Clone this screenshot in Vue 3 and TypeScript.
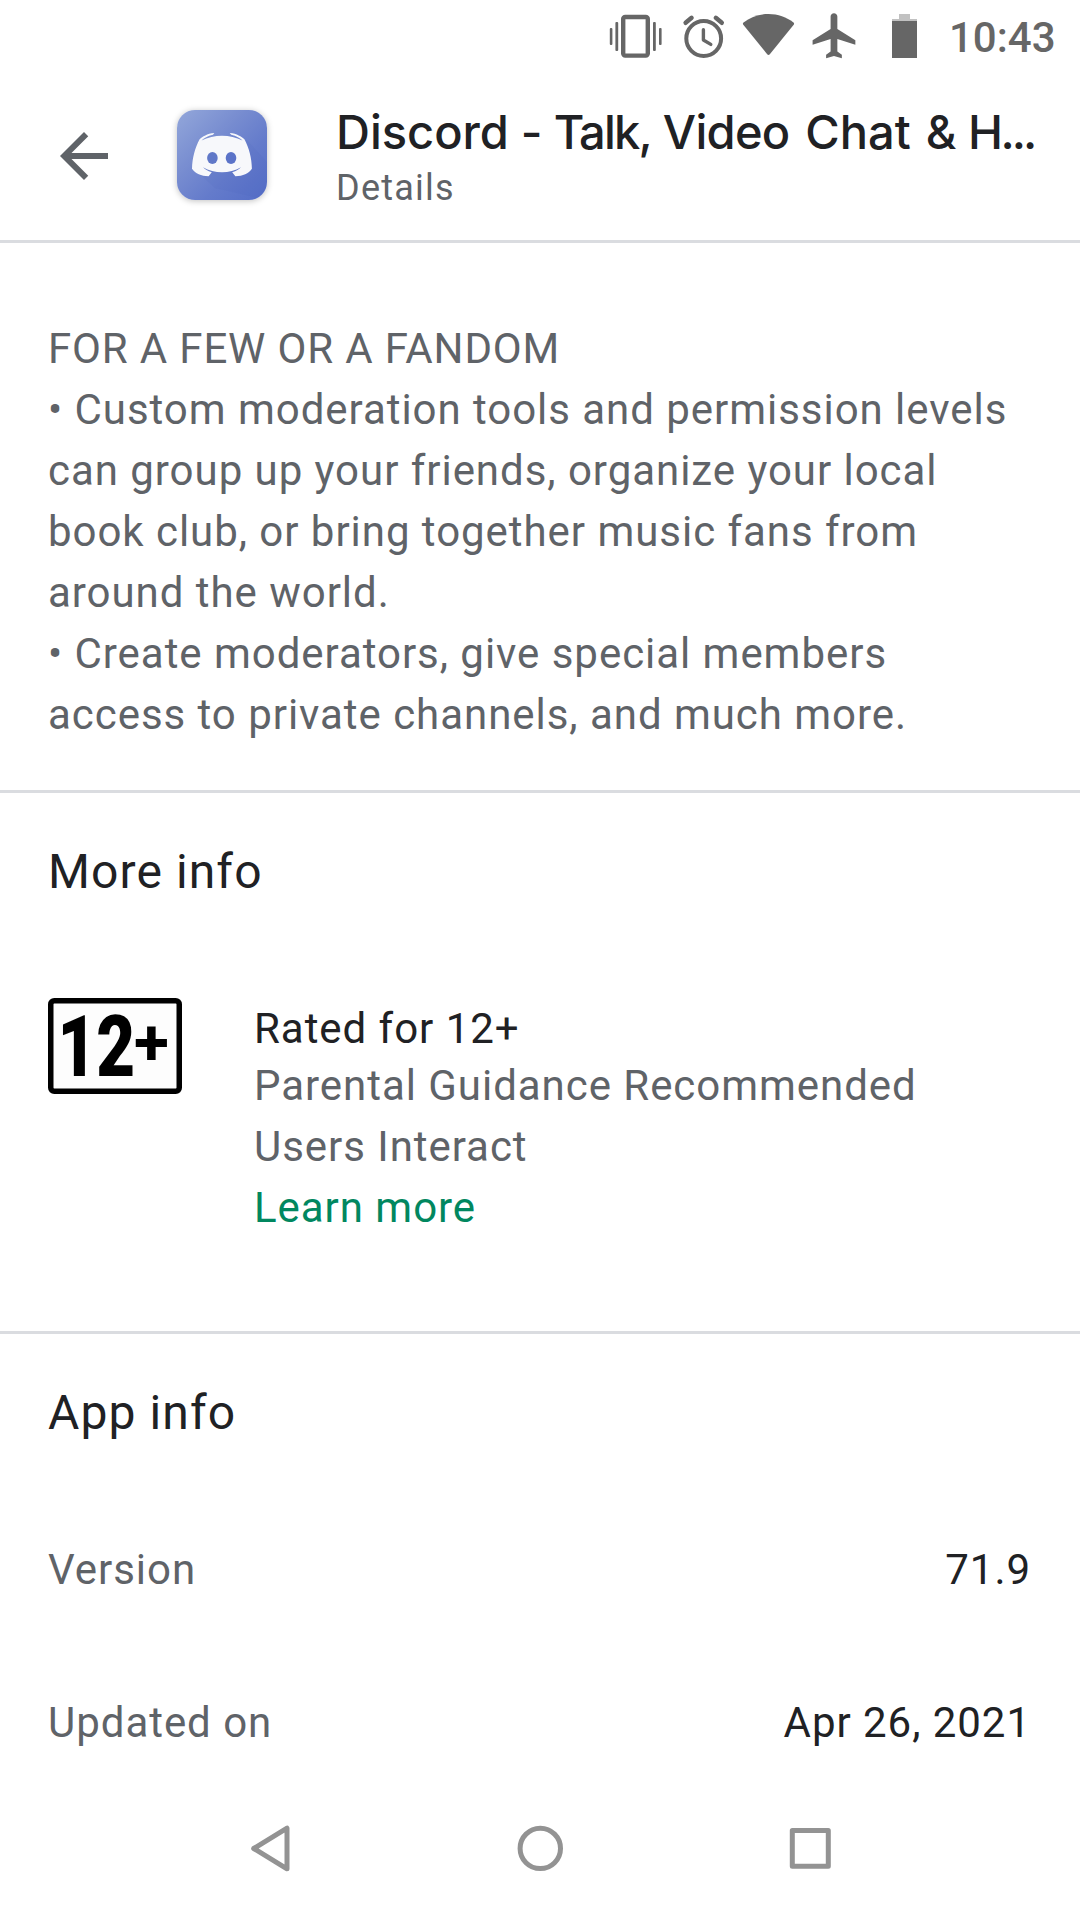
<script setup lang="ts">
interface InfoRow {
  label: string
  value: string
}

const description: string[] = [
  'FOR A FEW OR A FANDOM',
  '• Custom moderation tools and permission levels',
  'can group up your friends, organize your local',
  'book club, or bring together music fans from',
  'around the world.',
  '• Create moderators, give special members',
  'access to private channels, and much more.',
]

const rows: InfoRow[] = [
  { label: 'Version', value: '71.9' },
  { label: 'Updated on', value: 'Apr 26, 2021' },
]
</script>

<template>
  <div class="screen">
    <div class="status">
      <svg class="status-icons" width="320" height="72" viewBox="600 0 320 72" fill="#666">
        <rect x="623.2" y="17" width="24.6" height="38.6" rx="2" fill="none" stroke="#666" stroke-width="4.4" />
        <rect x="615.4" y="22" width="2.8" height="29" rx="1" />
        <rect x="609.8" y="28" width="2.6" height="17" rx="1" />
        <rect x="653" y="22" width="2.8" height="29" rx="1" />
        <rect x="659" y="28" width="2.6" height="17" rx="1" />
        <g fill="none" stroke="#666" stroke-linecap="round">
          <circle cx="703.7" cy="38.5" r="17.4" stroke-width="4" />
          <path d="M703.4 29.8v10.2l7.4 4.4" stroke-width="3.4" stroke-linejoin="round" />
          <path d="M685.6 22.8l6-5M721.8 22.8l-6-5" stroke-width="4.4" />
        </g>
        <path d="M743.5 22.6C750.5 17 759 14 768.5 14S786.5 17 793.5 22.6Q794.6 23.5 793.7 24.8L770 54Q768.5 55.8 767 54L743.3 24.8Q742.4 23.5 743.5 22.6z" />
        <path
          transform="translate(808.1 8.7) scale(2.25)"
          d="M21 16v-2l-8-5V3.5c0-.83-.67-1.5-1.5-1.5S10 2.67 10 3.5V9l-8 5v2l8-2.5V19l-2 1.5V22l3.5-1 3.5 1v-1.5L13 19v-5.5l8 2.5z"
        />
        <path d="M899 14h11v5h7v2h-25v-2h7z" fill="#c1c1c1" />
        <rect x="892" y="21" width="25" height="37" />
      </svg>
      <span class="clock">10:43</span>
    </div>

    <header class="header">
      <svg class="back" width="72" height="72" viewBox="0 0 24 24" fill="#5f6368">
        <path d="M20 11H7.83l5.59-5.59L12 4l-8 8 8 8 1.41-1.41L7.83 13H20v-2z" />
      </svg>
      <div class="app-icon">
        <svg width="90" height="90" viewBox="0 0 90 90">
          <path d="M18 60L38 78 90 90V52L70 30z" fill="#3f57b4" opacity=".08" />
          <path
            d="M37.3 22.9C30 23.5 25.5 26.5 22.6 29.3 18 38 15.2 48 15 58.8 18.5 63.5 24 66.2 31.6 66.3L34.8 62.2C30.5 61 28 59.3 26 57.2 37.5 63.8 52.5 63.8 64 57.2 62 59.3 59.5 61 55.2 62.2L58.4 66.3C66 66.2 71.5 63.5 74.9 58.8 74.8 48 72 38 67.4 29.3 64.5 26.5 60 23.5 52.7 22.9L54.2 24.8C59.5 26 63 28 65.5 30.6 53 24 37 24 24.5 30.6 27 28 30.5 26 36 24.8z"
            fill="#f7f8fb"
          />
          <ellipse cx="35.4" cy="48" rx="5.3" ry="5.9" fill="#6078c8" />
          <ellipse cx="54" cy="48" rx="5.3" ry="5.9" fill="#5b73c8" />
        </svg>
      </div>
      <div class="heading">
        <div class="title">
          <span class="w-discord">Discord</span> - <span class="w-talk">Talk,</span> <span>Video</span> <span class="w-chat">Chat</span> <span class="w-tail">&amp; H</span><span class="dots">...</span>
        </div>
        <div class="subtitle">Details</div>
      </div>
    </header>

    <section class="description">
      <p v-for="line in description" :key="line">{{ line }}</p>
    </section>

    <section class="more">
      <h2>More info</h2>
      <div class="rating">
        <svg class="badge" width="134" height="96" viewBox="0 0 134 96">
          <rect x="2.75" y="2.75" width="128.5" height="90.5" rx="3.5" fill="#fdfdfd" stroke="#000" stroke-width="5.5" />
          <g font-family="Roboto, sans-serif" letter-spacing="0">
            <text transform="translate(9.5 78) scale(.78 1)" font-size="86" font-weight="900">12</text>
            <text x="86" y="66.5" font-size="64" font-weight="700">+</text>
          </g>
        </svg>
        <div class="rating-text">
          <div class="rated">Rated for 12+</div>
          <div>Parental Guidance Recommended</div>
          <div>Users Interact</div>
          <div class="link">Learn more</div>
        </div>
      </div>
    </section>

    <section class="app-info">
      <h2>App info</h2>
      <div v-for="row in rows" :key="row.label" class="row">
        <span>{{ row.label }}</span>
        <span class="value">{{ row.value }}</span>
      </div>
    </section>

    <nav class="nav">
      <svg width="660" height="60" viewBox="210 1818 660 60" fill="none" stroke="#939393" stroke-width="5" stroke-linejoin="round">
        <path d="M253.7 1848.5L287 1828.2V1868.8z" />
        <circle cx="540.3" cy="1848.4" r="20.2" />
        <rect x="792.3" y="1830.5" width="36" height="35.7" />
      </svg>
    </nav>
  </div>
</template>

<style>
body {
  background: #fff;
  overflow: hidden;
}
</style>

<style scoped>
.screen {
  width: 1080px;
  height: 1920px;
  display: flex;
  flex-direction: column;
  overflow: hidden;
  background: #fff;
  color: #5f6368;
  font-family: Roboto, sans-serif;
  font-size: 42px;
  line-height: 61px;
  letter-spacing: 0.96px;
}
.status {
  display: flex;
  align-items: flex-start;
  height: 72px;
  padding-left: 600px;
  flex: none;
}
.clock {
  margin-left: 29px;
  line-height: 62px;
  padding-top: 7px;
  font-weight: 500;
  letter-spacing: 0;
  color: #666;
}
.header {
  display: flex;
  height: 168px;
  flex: none;
  border-bottom: 3px solid #dadce0;
}
.back {
  margin: 48px 0 0 48px;
}
.app-icon {
  width: 90px;
  height: 90px;
  margin: 38px 0 0 57px;
  border-radius: 18px;
  overflow: hidden;
  background: linear-gradient(135deg, #93a7da 0%, #778cd0 38%, #647bcb 65%, #546dc7 100%);
  box-shadow: 0 1px 6px rgba(0, 0, 0, 0.25);
}
.app-icon svg {
  display: block;
}
.heading {
  margin: 30px 0 0 69px;
  white-space: nowrap;
}
.title {
  color: #202124;
  font-family: Inter, sans-serif;
  font-weight: 500;
  font-size: 47px;
  line-height: 60px;
  letter-spacing: -0.7px;
}
.w-discord {
  letter-spacing: 0;
}
.w-talk {
  letter-spacing: -1.8px;
}
.w-chat {
  margin-left: 4px;
  letter-spacing: 0;
}
.w-tail {
  margin-left: 3px;
  letter-spacing: -0.5px;
}
.dots {
  margin-left: -2px;
  letter-spacing: -3px;
}
.subtitle {
  margin-top: 1px;
  font-size: 36px;
  line-height: 50px;
  letter-spacing: 1.25px;
}
.description {
  padding: 75px 48px 45px;
  border-bottom: 3px solid #dadce0;
}
.description p {
  margin: 0;
  white-space: pre;
}
.description p:first-child {
  letter-spacing: 0.85px;
}
h2 {
  margin: 0;
  padding-top: 48px;
  color: #202124;
  font-size: 48px;
  line-height: 62px;
  font-weight: 400;
  letter-spacing: 1.1px;
}
.more {
  height: 538px;
  padding: 0 48px;
  border-bottom: 3px solid #dadce0;
}
.rating {
  display: flex;
  gap: 72px;
  margin-top: 95px;
}
.badge {
  overflow: visible;
}
.rating-text {
  white-space: nowrap;
}
.rated {
  color: #202124;
  height: 57px;
}
.link {
  color: #01875f;
}
.app-info {
  padding: 0 48px;
}
.row {
  display: flex;
  justify-content: space-between;
  height: 61px;
  margin-bottom: 92px;
}
h2 + .row {
  margin-top: 95px;
}
.value {
  margin-right: 1px;
  color: #202124;
}
.nav {
  position: absolute;
  left: 0;
  top: 1776px;
  width: 1080px;
  height: 144px;
  display: flex;
  justify-content: center;
  align-items: center;
  background: #fff;
}
</style>
